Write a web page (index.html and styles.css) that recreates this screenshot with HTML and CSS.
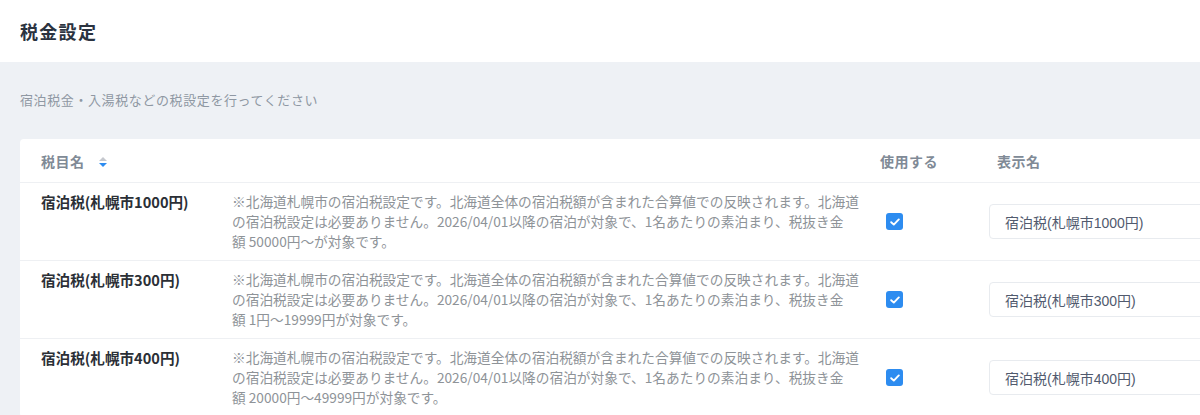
FILE: index.html
```html
<!DOCTYPE html>
<html lang="ja">
<head>
<meta charset="utf-8">
<title>税金設定</title>
<link rel="stylesheet" href="styles.css">
</head>
<body>
<header class="page-header">
  <h1 class="page-title">税金設定</h1>
</header>
<main class="content">
  <p class="subtitle">宿泊税金・入湯税などの税設定を行ってください</p>
  <div class="card">
    <div class="row head">
      <div class="cell c-name">税目名
        <span class="sort">
          <svg width="8" height="10" viewBox="0 0 8 10"><path d="M4 0 L8 4 L0 4 Z" fill="#c5c8ce"/><path d="M0 6 L8 6 L4 10 Z" fill="#2d8cf0"/></svg>
        </span>
      </div>
      <div class="cell c-desc"></div>
      <div class="cell c-use">使用する</div>
      <div class="cell c-disp">表示名</div>
    </div>

    <div class="row">
      <div class="cell c-name name">宿泊税(札幌市1000円)</div>
      <div class="cell c-desc desc">※北海道札幌市の宿泊税設定です。北海道全体の宿泊税額が含まれた合算値での反映されます。北海道<br>の宿泊税設定は必要ありません。2026/04/01以降の宿泊が対象で、1名あたりの素泊まり、税抜き金<br>額 50000円〜が対象です。</div>
      <div class="cell c-use mid"><span class="checkbox"><svg width="10" height="8" viewBox="0 0 10 8"><path d="M1.2 4.2 L3.8 6.6 L8.8 1.4" fill="none" stroke="#fff" stroke-width="1.9" stroke-linecap="round" stroke-linejoin="round"/></svg></span></div>
      <div class="cell c-disp mid"><div class="input">宿泊税(札幌市1000円)</div></div>
    </div>

    <div class="row">
      <div class="cell c-name name">宿泊税(札幌市300円)</div>
      <div class="cell c-desc desc">※北海道札幌市の宿泊税設定です。北海道全体の宿泊税額が含まれた合算値での反映されます。北海道<br>の宿泊税設定は必要ありません。2026/04/01以降の宿泊が対象で、1名あたりの素泊まり、税抜き金<br>額 1円〜19999円が対象です。</div>
      <div class="cell c-use mid"><span class="checkbox"><svg width="10" height="8" viewBox="0 0 10 8"><path d="M1.2 4.2 L3.8 6.6 L8.8 1.4" fill="none" stroke="#fff" stroke-width="1.9" stroke-linecap="round" stroke-linejoin="round"/></svg></span></div>
      <div class="cell c-disp mid"><div class="input">宿泊税(札幌市300円)</div></div>
    </div>

    <div class="row">
      <div class="cell c-name name">宿泊税(札幌市400円)</div>
      <div class="cell c-desc desc">※北海道札幌市の宿泊税設定です。北海道全体の宿泊税額が含まれた合算値での反映されます。北海道<br>の宿泊税設定は必要ありません。2026/04/01以降の宿泊が対象で、1名あたりの素泊まり、税抜き金<br>額 20000円〜49999円が対象です。</div>
      <div class="cell c-use mid"><span class="checkbox"><svg width="10" height="8" viewBox="0 0 10 8"><path d="M1.2 4.2 L3.8 6.6 L8.8 1.4" fill="none" stroke="#fff" stroke-width="1.9" stroke-linecap="round" stroke-linejoin="round"/></svg></span></div>
      <div class="cell c-disp mid"><div class="input">宿泊税(札幌市400円)</div></div>
    </div>
  </div>
</main>
</body>
</html>
```

FILE: styles.css
```css
* { box-sizing: border-box; }
html, body {
  margin: 0;
  padding: 0;
  overflow: hidden;
  height: 415px;
}
body {
  font-family: "Noto Sans CJK JP", "Noto Sans", sans-serif;
  background: #eef1f5;
  color: #333;
}
.page-header {
  height: 62px;
  background: #fff;
  display: flex;
  align-items: center;
  padding-left: 20px;
}
.page-title {
  margin: 0;
  font-size: 18px;
  font-weight: 700;
  letter-spacing: 1.3px;
  color: #2b3340;
}
.content {
  padding: 28px 0 0 20px;
  overflow: hidden;
}
.subtitle {
  margin: 0 0 29px;
  font-size: 13px;
  line-height: 20px;
  letter-spacing: 0.6px;
  color: #8f98a3;
}
.card {
  width: 1320px;
  background: #fff;
  border-radius: 4px;
}
.row {
  display: grid;
  grid-template-columns: 191px 655px 111px 1fr;
  border-bottom: 1px solid #eef0f3;
  min-height: 78px;
}
.row.head {
  min-height: 44px;
  align-items: center;
}
.head .cell {
  font-size: 14px;
  font-weight: 700;
  color: #808a96;
  letter-spacing: 0.5px;
}
.c-name { padding: 8px 0 9px 21px; }
.c-desc { padding: 8px 0 9px 21px; }
.c-use { padding-left: 14px; }
.c-disp { padding-left: 20px; }
.head .c-name, .head .c-desc { padding-top: 0; padding-bottom: 0; }
.sort {
  display: inline-flex;
  vertical-align: middle;
  margin-left: 11px;
  position: relative;
  top: -1px;
}
.name {
  font-size: 14.6px;
  line-height: 20px;
  font-weight: 700;
  color: #2b2f36;
  padding-top: 9px;
}
.desc {
  font-size: 13.7px;
  line-height: 20px;
  color: #8e9398;
  white-space: nowrap;
}
.mid {
  display: flex;
  align-items: center;
}
.row .c-use.mid { padding-left: 20px; }
.row .c-disp.mid { padding-left: 12px; }
.checkbox {
  width: 17px;
  height: 17px;
  border-radius: 3px;
  background: #2d8cf0;
  display: flex;
  align-items: center;
  justify-content: center;
}
.input {
  width: 300px;
  height: 35px;
  border: 1px solid #e8ebef;
  border-radius: 4px;
  padding-left: 15px;
  display: flex;
  align-items: center;
  font-family: "Liberation Sans", "Noto Sans CJK JP", sans-serif;
  font-size: 14px;
  color: #515a6e;
}
```
